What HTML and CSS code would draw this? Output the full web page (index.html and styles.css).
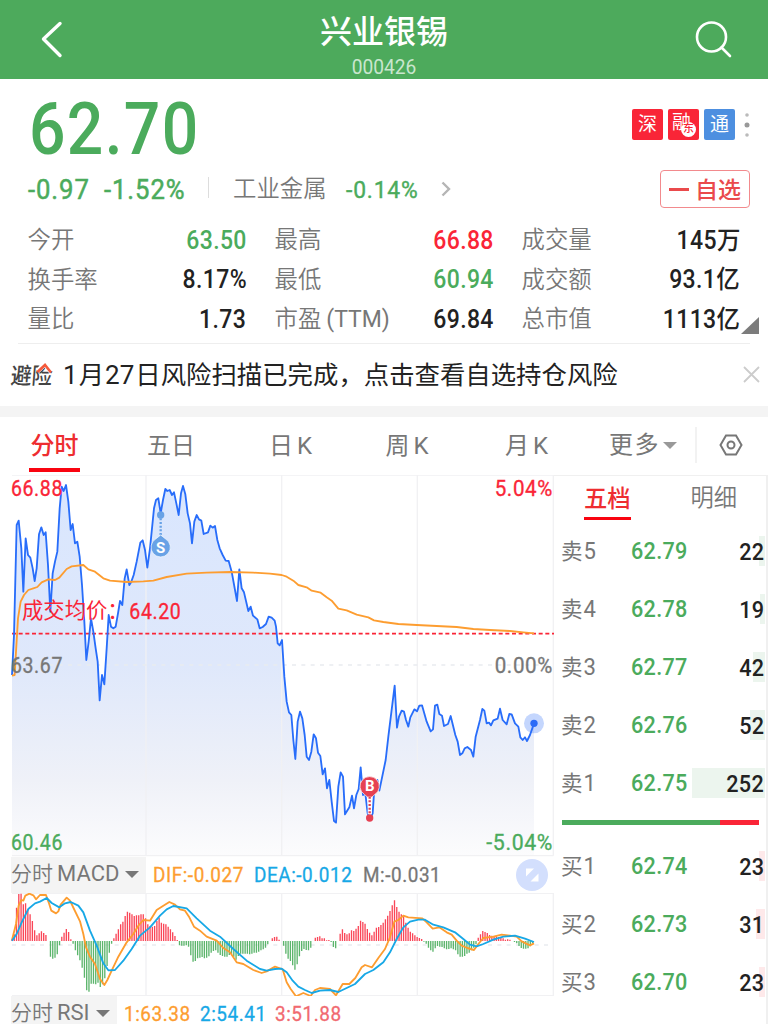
FILE: index.html
```
<!DOCTYPE html>
<html lang="zh-CN">
<head>
  <meta charset="UTF-8">
  <meta name="viewport" content="width=device-width, initial-scale=1.0">
  <title>兴业银锡 000426</title>
  <link rel="stylesheet" href="styles.css">
</head>
<body>

  <header class="topbar">
    <svg class="back" width="24" height="38" viewBox="0 0 24 38"><path d="M20 3.500L3.500 19L20 35.500"/></svg>
    <div class="title">
      <h1>兴业银锡</h1>
      <span>000426</span>
    </div>
    <svg class="search" width="38" height="38" viewBox="0 0 38 38"><circle cx="16.500" cy="16" r="14.500"/><path d="M26.500 26.500L35 35"/></svg>
  </header>

  <section class="quote">
    <div class="price-row">
      <div class="price">62.70</div>
      <div class="badges">
        <span class="badge">深</span>
        <span class="badge margin">融<i>东</i></span>
        <span class="badge blue">通</span>
        <svg width="6" height="24" viewBox="0 0 6 24"><circle cx="3" cy="2" r="1.800" fill="#bbb"/><circle cx="3" cy="12" r="2.500" fill="#999"/><circle cx="3" cy="22" r="1.800" fill="#bbb"/></svg>
      </div>
    </div>

    <div class="change-row">
      <span class="num chg">-0.97</span>
      <span class="num pct">-1.52%</span>
      <span class="sep"></span>
      <span class="sector">工业金属</span>
      <span class="num sector-pct">-0.14%</span>
      <svg class="arrow" width="10" height="16" viewBox="0 0 10 16"><path d="M1.500 1.500L8 8L1.500 14.500"/></svg>
      <button class="fav"><b></b>自选</button>
    </div>

    <div class="stats">
      <div><label>今开</label><em class="green">63.50</em></div>
      <div><label>最高</label><em class="red">66.88</em></div>
      <div><label>成交量</label><em>145<u>万</u></em></div>
      <div><label>换手率</label><em>8.17%</em></div>
      <div><label>最低</label><em class="green">60.94</em></div>
      <div><label>成交额</label><em>93.1<u>亿</u></em></div>
      <div><label>量比</label><em>1.73</em></div>
      <div><label>市盈<s>(TTM)</s></label><em>69.84</em></div>
      <div><label>总市值</label><em>1113<u>亿</u></em></div>
      <span class="corner"></span>
    </div>
  </section>

  <section class="notice">
    <span class="logo"><span>避险</span><svg width="20" height="13" viewBox="0 0 20 13"><path class="gap" d="M3.500 9L11 2L17 9.500"/><path d="M3.500 10L11 3L17 10.500"/></svg></span>
    <p><span class="n1">1</span>月<span class="n27">27</span>日风险扫描已完成，点击查看自选持仓风险</p>
    <svg class="close" width="17" height="17" viewBox="0 0 17 17"><path d="M1 1L16 16M16 1L1 16"/></svg>
  </section>

  <nav class="tabs">
    <a class="active"><span>分时</span></a>
    <a>五日</a>
    <a>日<i>K</i></a>
    <a>周<i>K</i></a>
    <a>月<i>K</i></a>
    <a class="more">更多<b class="caret"></b></a>
    <svg class="gear" width="24" height="22" viewBox="0 0 24 22"><path d="M7 1.500H17L22.500 11L17 20.500H7L1.500 11Z"/><circle cx="12" cy="11" r="3.500"/></svg>
  </nav>

  <main>
    <div class="charts">
      <!-- 分时图 -->
      <svg class="line-chart" width="554" height="382" viewBox="0 0 1662 1146">
        <defs>
          <linearGradient id="fill" x1="0" y1="0" x2="0" y2="1146" gradientUnits="userSpaceOnUse">
            <stop offset="0" stop-color="#d9e6fe"/>
            <stop offset=".5" stop-color="#dfe8fb"/>
            <stop offset=".8" stop-color="#eff1f8"/>
            <stop offset="1" stop-color="#fcfcfd"/>
          </linearGradient>
        </defs>
        <path id="area" fill="url(#fill)"/>
        <path class="grid" d="M36 0H1660M438 0V1142M845 0V1142M1252 0V1142M1660 0V1142M36 1142H1660"/>
        <path class="zero" d="M36 570H1660"/>
        <path class="cost" d="M36 476H1662"/>
        <polyline id="price" points="36,600 42,480 50,150 56,137 64,220 70,350 77,190 84,240 91,248 98,280 104,318 110,280 117,178 124,157 131,180 137,172 144,270 151,410 158,295 165,260 172,230 179,100 185,35 191,48 198,30 205,80 212,165 218,147 225,205 232,200 239,245 246,330 253,440 259,555 266,500 273,430 280,470 287,520 293,560 299,676 306,600 313,628 320,520 326,420 333,455 340,460 347,455 354,415 360,378 367,390 374,310 380,283 388,330 394,320 401,300 410,260 421,203 428,196 435,225 442,278 450,220 462,100 468,75 475,70 482,115 489,75 496,42 502,48 509,45 516,60 522,52 529,85 536,120 543,55 549,33 556,58 563,115 570,145 576,205 583,140 590,120 597,133 604,137 611,177 624,172 631,152 638,158 645,153 652,195 659,220 668,240 677,257 686,258 695,290 711,378 718,283 725,340 732,352 745,408 752,395 759,422 772,433 779,460 788,456 798,447 806,425 815,428 824,437 828,455 833,505 839,511 846,495 853,605 860,680 867,712 874,720 880,795 886,852 893,740 900,710 907,730 914,780 920,845 927,855 934,830 941,778 948,790 954,833 961,843 968,898 975,880 981,940 988,915 995,980 1002,1038 1008,1043 1015,935 1022,892 1029,905 1035,1018 1048,997 1056,962 1062,1000 1069,960 1076,942 1082,877 1089,960 1096,955 1103,1015 1109,1035 1118,1015 1124,925 1132,915 1138,947 1157,855 1165,785 1184,632 1191,758 1197,725 1205,707 1212,710 1218,735 1225,755 1231,727 1243,703 1251,709 1258,692 1266,691 1280,740 1292,769 1299,763 1305,692 1312,689 1318,717 1326,722 1332,753 1344,747 1352,723 1366,780 1373,800 1380,840 1387,835 1394,820 1402,816 1413,825 1420,845 1427,785 1440,735 1447,702 1453,707 1460,745 1467,743 1473,751 1480,736 1493,731 1500,701 1508,735 1520,748 1528,717 1535,718 1545,745 1555,755 1561,787 1568,795 1575,787 1581,798 1590,780 1602,745"/>
        <polyline class="avg" points="36,602 44,600 48,530 54,430 62,380 72,360 85,345 100,340 112,336 125,322 145,313 165,315 178,308 200,282 215,274 250,270 265,283 285,290 310,310 330,317 380,321 430,319 460,317 500,306 560,296 620,293 690,291 760,293 810,296 845,300 860,305 880,317 895,330 920,337 935,347 962,353 980,367 995,377 1015,401 1040,406 1070,419 1105,427 1122,436 1150,441 1195,447 1250,450 1310,453 1370,456 1420,462 1470,465 1530,468 1570,472 1602,475"/>
        <circle cx="1602" cy="745" r="30" fill="#2a6bf7" fill-opacity=".28"/>
        <circle cx="1602" cy="745" r="11" fill="#2a6bf7"/>

        <g class="mark sell">
          <path d="M482 130V185"/>
          <circle cx="482" cy="120" r="11"/>
          <path class="pin" d="M482 180L497 192A29 29 0 1 1 467 192Z"/>
          <text x="482" y="235">S</text>
        </g>
        <g class="mark buy">
          <path class="pin" d="M1109 972L1093 958A29 29 0 1 1 1125 958Z"/>
          <path class="under" d="M1109 965V1018"/>
          <path d="M1109 965V1018"/>
          <circle cx="1109" cy="1029" r="11"/>
          <text x="1109" y="949">B</text>
        </g>

        <g class="axis">
          <text class="red" transform="translate(33 63) scale(.9 1)">66.88</text>
          <text class="red" transform="translate(1659 63) scale(.95 1)" text-anchor="end">5.04%</text>
          <text class="cjk red" x="66" y="430">成交均价：</text>
          <text class="red" transform="translate(388 431) scale(.9 1)">64.20</text>
          <text class="grey" transform="translate(33 594) scale(.9 1)">63.67</text>
          <text class="grey" transform="translate(1659 594) scale(.95 1)" text-anchor="end">0.00%</text>
          <text class="green" transform="translate(33 1125) scale(.9 1)">60.46</text>
          <text class="green" transform="translate(1659 1125) scale(.98 1)" text-anchor="end">-5.04%</text>
        </g>
      </svg>

      <div class="ind">
        <span class="ind-name">分时<i>MACD</i><b class="caret dark"></b></span>
        <span class="num orange">DIF:-0.027</span>
        <span class="num blue">DEA:-0.012</span>
        <span class="num grey">M:-0.031</span>
        <svg class="expand" width="32" height="32" viewBox="0 0 32 32"><circle cx="16" cy="16" r="16" fill="#d3dffd"/><path fill="#fff" d="M10 9.500H18L10 17.500ZM22.500 14.500V22.500H14.500Z"/></svg>
      </div>

      <svg class="macd" width="554" height="103" viewBox="0 127 1662 309">
        <path class="grid" d="M36 128H1660M438 127V436M845 127V436M1252 127V436M1660 127V436M36 435H1660"/>
        <path class="zero" d="M36 283H1660"/>
        <path id="up"/>
        <path id="down"/>
        <polyline class="avg" points="36,268 48,220 56,165 64,148 70,150 76,135 88,129 100,134 108,146 120,133 138,133 146,155 154,180 168,188 175,182 182,162 200,141 210,150 222,175 240,212 250,250 258,290 270,318 285,340 300,385 313,403 322,388 335,360 355,318 380,275 400,250 415,225 430,208 450,210 470,178 490,165 508,154 525,162 540,176 555,180 568,200 582,228 600,240 620,258 650,270 670,292 690,305 710,335 730,340 760,358 785,367 800,362 825,348 848,356 860,395 872,415 888,437 910,427 932,436 945,418 960,412 990,415 1008,434 1028,400 1048,400 1066,382 1085,350 1095,343 1116,350 1135,322 1155,295 1170,260 1183,213 1195,208 1210,195 1225,200 1267,203 1280,215 1298,234 1318,230 1340,245 1355,252 1370,270 1385,285 1402,292 1422,298 1435,280 1450,262 1480,258 1505,252 1530,255 1550,258 1565,272 1590,284 1602,278"/>
        <polyline class="dea" points="36,270 50,250 65,215 85,175 105,158 120,153 140,142 155,157 178,170 195,158 212,154 235,165 250,185 270,240 290,285 310,338 325,359 345,358 370,330 395,295 420,255 450,230 480,195 500,176 520,166 560,173 590,203 630,240 660,258 700,295 740,330 780,355 800,360 825,355 845,354 860,365 878,390 895,408 915,418 935,427 960,420 990,418 1015,424 1040,412 1065,400 1095,370 1120,358 1150,335 1170,305 1190,265 1210,230 1230,213 1255,207 1275,207 1300,222 1330,230 1365,245 1390,265 1410,282 1430,287 1450,280 1480,267 1510,258 1545,255 1575,264 1602,274"/>
      </svg>

      <div class="ind rsi">
        <span class="ind-name">分时<i>RSI</i><b class="caret dark"></b></span>
        <span class="num orange">1:63.38</span>
        <span class="num blue">2:54.41</span>
        <span class="num pink">3:51.88</span>
      </div>
    </div>

    <!-- 五档盘口 -->
    <aside class="book">
      <div class="book-tabs"><a class="active">五档</a><a>明细</a></div>
      <div class="level sell"><label>卖<i>5</i></label><em>62.79</em><strong><b style="width:6px"></b><span>22</span></strong></div>
      <div class="level sell"><label>卖<i>4</i></label><em>62.78</em><strong><b style="width:5px"></b><span>19</span></strong></div>
      <div class="level sell"><label>卖<i>3</i></label><em>62.77</em><strong><b style="width:12px"></b><span>42</span></strong></div>
      <div class="level sell"><label>卖<i>2</i></label><em>62.76</em><strong><b style="width:15px"></b><span>52</span></strong></div>
      <div class="level sell"><label>卖<i>1</i></label><em>62.75</em><strong><b style="width:73px"></b><span>252</span></strong></div>
      <div class="ratio"><b style="width:80.3%"></b></div>
      <div class="level buy"><label>买<i>1</i></label><em>62.74</em><strong><b style="width:6px"></b><span>23</span></strong></div>
      <div class="level buy"><label>买<i>2</i></label><em>62.73</em><strong><b style="width:9px"></b><span>31</span></strong></div>
      <div class="level buy"><label>买<i>3</i></label><em>62.70</em><strong><b style="width:6px"></b><span>23</span></strong></div>
      <div class="level buy"><strong><b style="width:3px"></b></strong></div>
    </aside>
  </main>

  <script>
    // 分时填充区域
    const pts = document.getElementById('price').getAttribute('points');
    document.getElementById('area').setAttribute('d', 'M36 1142L' + pts + 'L1602 1142Z');

    // MACD 柱
    const bars = [5,20,100,141,142,110,113,95,80,60,32,17,23,29,24,18,0,-47,-53,-50,-40,-13,13,25,36,27,5,-8,-28,-43,
      -58,-80,-110,-148,-152,-128,-128,-130,-125,-138,-130,-112,-75,-35,-8,8,22,35,50,58,75,88,85,80,75,77,77,80,80,68,
      50,45,43,45,60,70,55,52,50,43,35,26,15,3,-13,-14,-14,-13,-17,-43,-62,-60,-52,-50,-48,-52,-50,-46,-35,-30,
      -28,-35,-42,-45,-47,-47,-42,-40,-47,-56,-45,-38,-38,-38,-38,-40,-38,-35,-35,-32,-28,-25,-20,-10,0,8,12,13,4,0,
      -14,-38,-53,-60,-73,-86,-70,-46,-30,-24,-27,-28,-20,0,10,12,14,8,8,2,3,-3,-18,-22,0,22,35,24,20,23,
      32,30,37,45,61,57,52,36,25,17,28,40,42,48,55,65,76,90,107,122,102,88,80,74,55,40,28,23,17,12,
      9,6,-2,-8,-20,-28,-32,-22,-15,-17,-18,-22,-25,-24,-22,-25,-28,-40,-47,-47,-45,-38,-35,-28,-20,-10,10,20,30,27,
      24,18,16,15,14,12,12,8,4,5,4,0,-3,-7,-15,-21,-23,-23,-22,-16,-6];
    let up = '', down = '';
    bars.forEach((v, i) => {
      const seg = 'M' + (36 + i * 6.79).toFixed(1) + ' 271v' + (-v);
      if (v > 0) up += seg; else down += seg;
    });
    document.getElementById('up').setAttribute('d', up);
    document.getElementById('down').setAttribute('d', down);
  </script>

</body>
</html>
```
FILE: styles.css
```
* { box-sizing: border-box; }

body {
  margin: 0;
  width: 768px;
  height: 1024px;
  overflow: hidden;
  background: #fff;
  color: #222;
  font-family: Roboto, "Noto Sans CJK SC", sans-serif;
}

i, em, u, s { font-style: normal; text-decoration: none; }
svg { display: block; flex: none; }

.red { color: #fa2537; fill: #fa2537; }
.green { color: #4bab5c; fill: #4bab5c; }
.grey { color: #777; fill: #777; }
.orange { color: #fd9d30; }
.blue { color: #17a8e6; }
.pink { color: #f16a70; }

/* 顶栏 */
.topbar {
  display: flex;
  justify-content: space-between;
  height: 79px;
  padding: 0 35px 0 40px;
  background: #4daa5c;
  color: #fff;
}
.topbar svg { fill: none; stroke: #fff; stroke-linecap: round; stroke-linejoin: round; }
.back { margin-top: 20px; stroke-width: 3.4; }
.search { margin-top: 21px; stroke-width: 2.6; }
.title { text-align: center; padding-top: 9px; margin-left: 9px; }
.title h1 {
  margin: 0;
  font: 500 32px/40px "Noto Sans CJK SC", sans-serif;
}
.title span {
  display: block;
  margin-top: 3px;
  font-size: 20px;
  line-height: 31px;
  color: #c9e6ce;
  transform: scaleX(.96);
}

/* 报价 */
.quote { height: 264px; padding: 0 18px 0 27px; }
.price-row { display: flex; justify-content: space-between; height: 92px; }
.price {
  margin-left: 2px;
  font-size: 73px;
  line-height: 101px;
  font-weight: 500;
  letter-spacing: 1.500px;
  color: #4bab5c;
  transform: scaleX(.88);
  transform-origin: left;
}
.badges { display: flex; gap: 5px; padding-top: 30px; }
.badge {
  position: relative;
  width: 31px;
  height: 31px;
  border-radius: 2px;
  background: #f92537;
  color: #fff;
  font-size: 19px;
  line-height: 31px;
  text-align: center;
}
.badge.blue { background: #4d8fe0; color: #fff; }
.badge.margin { font-size: 19px; line-height: 28px; padding-right: 4px; }
.badge i {
  position: absolute;
  right: 3px;
  bottom: 3px;
  width: 15px;
  height: 15px;
  border-radius: 50%;
  background: #fff;
  color: #f92537;
  font-size: 11px;
  line-height: 14px;
  font-weight: 500;
}
.badges svg { margin: 4px 0 0 4px; }

.change-row { display: flex; align-items: center; height: 36px; }
.num { font-weight: 500; white-space: nowrap; }
.chg, .pct { padding-top: 2px; font-size: 27px; color: #4bab5c; font-weight: 400; -webkit-text-stroke: .5px; transform: scaleX(.95); transform-origin: left; letter-spacing: 1px; }
.chg { width: 76px; padding-left: 1px; }
.pct { width: 105px; padding-left: 1px; }
.sep { width: 1px; height: 21px; margin-bottom: 3px; background: #ddd; }
.sector { margin-left: 24px; width: 113px; font-size: 23.400px; line-height: 34px; color: #777; font-weight: 350; }
.sector-pct { width: 96px; padding-top: 1px; font-size: 24px; color: #4bab5c; font-weight: 400; -webkit-text-stroke: .4px; letter-spacing: .9px; transform: scaleX(.95); transform-origin: left; }
.arrow { fill: none; stroke: #b5b5b5; stroke-width: 2.4; margin-left: -1px; }
.fav {
  display: flex;
  align-items: center;
  width: 90px;
  height: 38px;
  margin-left: auto;
  padding: 0 0 2px 8px;
  border: 1.500px solid #f28a8d;
  border-radius: 4px;
  background: #fff;
  color: #ea4a4c;
  font: 500 23px/34px "Noto Sans CJK SC", sans-serif;
  white-space: nowrap;
}
.fav b { width: 20px; height: 3px; margin: 2px 6px 0 0; background: #ea4a4c; }

.stats {
  position: relative;
  display: grid;
  grid-template-columns: 219px 219px 219px;
  grid-auto-rows: 39.500px;
  column-gap: 28px;
  margin-top: 13px;
  height: 123.500px;
  border-bottom: 1px solid #eee;
  margin-left: -9px;
  padding-left: 9.500px;
}
.stats div { display: flex; justify-content: space-between; align-items: center; white-space: nowrap; }
.stats label { padding-top: 1px; font-size: 23.400px; line-height: 34px; color: #777; font-weight: 350; }
.stats label s { font-weight: 400; font-size: 23px; margin-left: 5px; }
.stats em {
  padding-top: 2px;
  font-size: 25px;
  line-height: 34px;
  font-weight: 500;
  letter-spacing: .4px;
  transform: scaleX(.92);
  transform-origin: right;
}
.stats u { font-family: "Noto Sans CJK SC"; font-size: 25.500px; line-height: 20px; }
.corner {
  position: absolute;
  right: -9px;
  bottom: 9px;
  border: solid transparent;
  border-width: 17px 0 0 18px;
  border-top: 0;
  border-bottom: 17px solid #7c7c7c;
}

/* 公告 */
.notice {
  display: flex;
  align-items: center;
  height: 74px;
  padding: 0 8px 0 11px;
  border-bottom: 11px solid #f4f4f4;
}
.logo { position: relative; width: 52px; height: 30px; }
.logo span {
  display: block;
  width: 48px;
  font: 500 23px/28px "Noto Sans CJK SC", sans-serif;
  color: #444;
  transform: scaleX(.9) skewX(-5deg);
  transform-origin: left;
}
.logo svg { position: absolute; left: 23px; top: 2px; fill: none; stroke: #f4593b; stroke-width: 2.6; }
.logo .gap { stroke: #fff; stroke-width: 5; }
.notice p {
  flex: 1;
  margin: 0;
  font: 400 25.400px/34px "Noto Sans CJK SC", sans-serif;
  color: #222;
  white-space: nowrap;
  padding-bottom: 2px;
}
.notice .n1, .n27 { font-family: Roboto; font-size: 26px; }
.notice .n1 { margin-right: 1px; }
.notice .n27 { margin: 0 1px; }
.close { stroke: #ccc; stroke-width: 1.8; }

/* 周期 */
.tabs {
  display: grid;
  grid-template-columns: 109px 124px 115px 118px 121px 110px 1fr;
  height: 58px;
  font: 400 24px/58px Roboto, "Noto Sans CJK SC", sans-serif;
  color: #777;
  text-align: center;
}
.tabs a i { margin-left: 4px; }
.tabs .active { color: #ee2d30; font-weight: 500; }
.tabs .active span { display: inline-block; width: 51px; height: 55px; border-bottom: 4px solid #f90410; }
.tabs .more {
  display: flex;
  align-items: center;
  height: 36px;
  margin-top: 10px;
  padding-left: 22px;
  border-right: 2px solid #f2f2f2;
  letter-spacing: 1.500px;
}
.caret {
  margin-left: 3px;
  border: 7px solid transparent;
  border-top: 7px solid #999;
  border-bottom: 0;
}
.caret.dark { border-top-color: #777; }
.gear { margin: 17px 0 0 22px; fill: none; stroke: #777; stroke-width: 2; }

main { display: flex; }
.charts { width: 554px; flex: none; }

.grid { fill: none; stroke: #f1f1f3; stroke-width: 4; }
.zero { stroke: #e9ebf0; stroke-width: 4; stroke-dasharray: 12 16; }
.cost { stroke: #fa2537; stroke-width: 5; stroke-dasharray: 12 8; }
#price { fill: none; stroke: #286dfa; stroke-width: 5.500; stroke-linejoin: round; }
.avg, .dea { fill: none; stroke: #fd9d30; stroke-width: 5.500; stroke-linejoin: round; }
.dea { stroke: #17a8e6; }
#up { stroke: #fa4658; stroke-width: 4; }
#down { stroke: #5cb56c; stroke-width: 4; }

.axis text { font-size: 65px; font-weight: 400; stroke-width: 1; letter-spacing: 2px; }
.axis .red { stroke: #fa2537; }
.axis .green { stroke: #4bab5c; }
.axis .grey { stroke: #777; }
.axis .cjk { font-family: "Noto Sans CJK SC"; font-size: 64px; letter-spacing: 0; stroke: none; }
.mark text { fill: #fff; font: 700 45px Roboto; text-anchor: middle; }
.mark path { fill: none; stroke-width: 7; stroke-dasharray: 6 5; }
.mark .pin { stroke-dasharray: none; stroke: #fff; stroke-width: 2; }
.mark .under { stroke: #fff; stroke-dasharray: none; stroke-width: 12; }
.sell circle, .sell .pin { fill: #68a2e6; }
.mark.sell > path:first-child { stroke: #68a2e6; }
.buy circle, .buy .pin { fill: #e64152; }
.mark.buy > path:nth-child(3) { stroke: #e64152; }

.ind {
  display: flex;
  align-items: center;
  height: 36px;
  margin-left: 11px;
  font-size: 20px;
}
.ind .num { font-weight: 400; -webkit-text-stroke: .3px; margin-right: 10px; letter-spacing: .6px; transform: scaleX(.945); transform-origin: left; }
.ind .num + .num { margin-left: -5px; }
.ind-name {
  display: flex;
  align-items: center;
  width: 135px;
  height: 36px;
  margin-right: 7px;
  background: #f4f4f4;
  color: #777;
  font-size: 21px;
  line-height: 32px;
  padding-bottom: 2px;
  font-weight: 350;
  white-space: nowrap;
}
.ind-name i { font-weight: 400; font-size: 22px; margin-left: 4px; }
.ind-name .caret { margin-left: 6px; }
.expand { margin-left: auto; margin-right: 6px; }
.rsi .ind-name { width: 106px; }

/* 盘口 */
.book {
  width: 214px;
  height: 550px;
  overflow: hidden;
  border: 1px solid #f0f0f0;
  border-width: 1px 2px 0 0;
}
.book-tabs {
  display: flex;
  justify-content: space-between;
  height: 46px;
  padding: 5px 29px 0 30px;
  font-size: 23.300px;
  line-height: 34px;
  font-weight: 350;
  color: #777;
}
.book-tabs .active { height: 39px; border-bottom: 3.500px solid #f90410; color: #ee2d30; font-weight: 500; line-height: 37px; }
.level { display: flex; align-items: center; height: 58px; padding-left: 7px; }
.level label { width: 70px; font-size: 21.500px; line-height: 34px; color: #777; }
.level label i { font-size: 24px; display: inline-block; transform: scaleX(.92); }
.level em {
  width: 57px;
  font-size: 23.500px;
  font-weight: 500;
  color: #4bab5c;
  letter-spacing: .3px;
  transform: scaleX(.92);
  transform-origin: left;
}
.level strong {
  position: relative;
  flex: 1;
  height: 30px;
  margin-right: 1px;
  font-size: 23.500px;
  line-height: 32px;
  font-weight: 500;
  text-align: right;
}
.level strong span { display: inline-block; letter-spacing: .3px; transform: translateX(-1px) scaleX(.92); transform-origin: right; }
.level strong b { position: absolute; right: 0; top: 0; height: 30px; z-index: -1; background: #ecf5ee; }
.level.buy strong b { background: #fee9ea; }
.ratio { height: 5px; margin: 8px 7px 12px 8px; background: #fa2537; }
.ratio b { display: block; height: 5px; background: #4bab5c; }
```
